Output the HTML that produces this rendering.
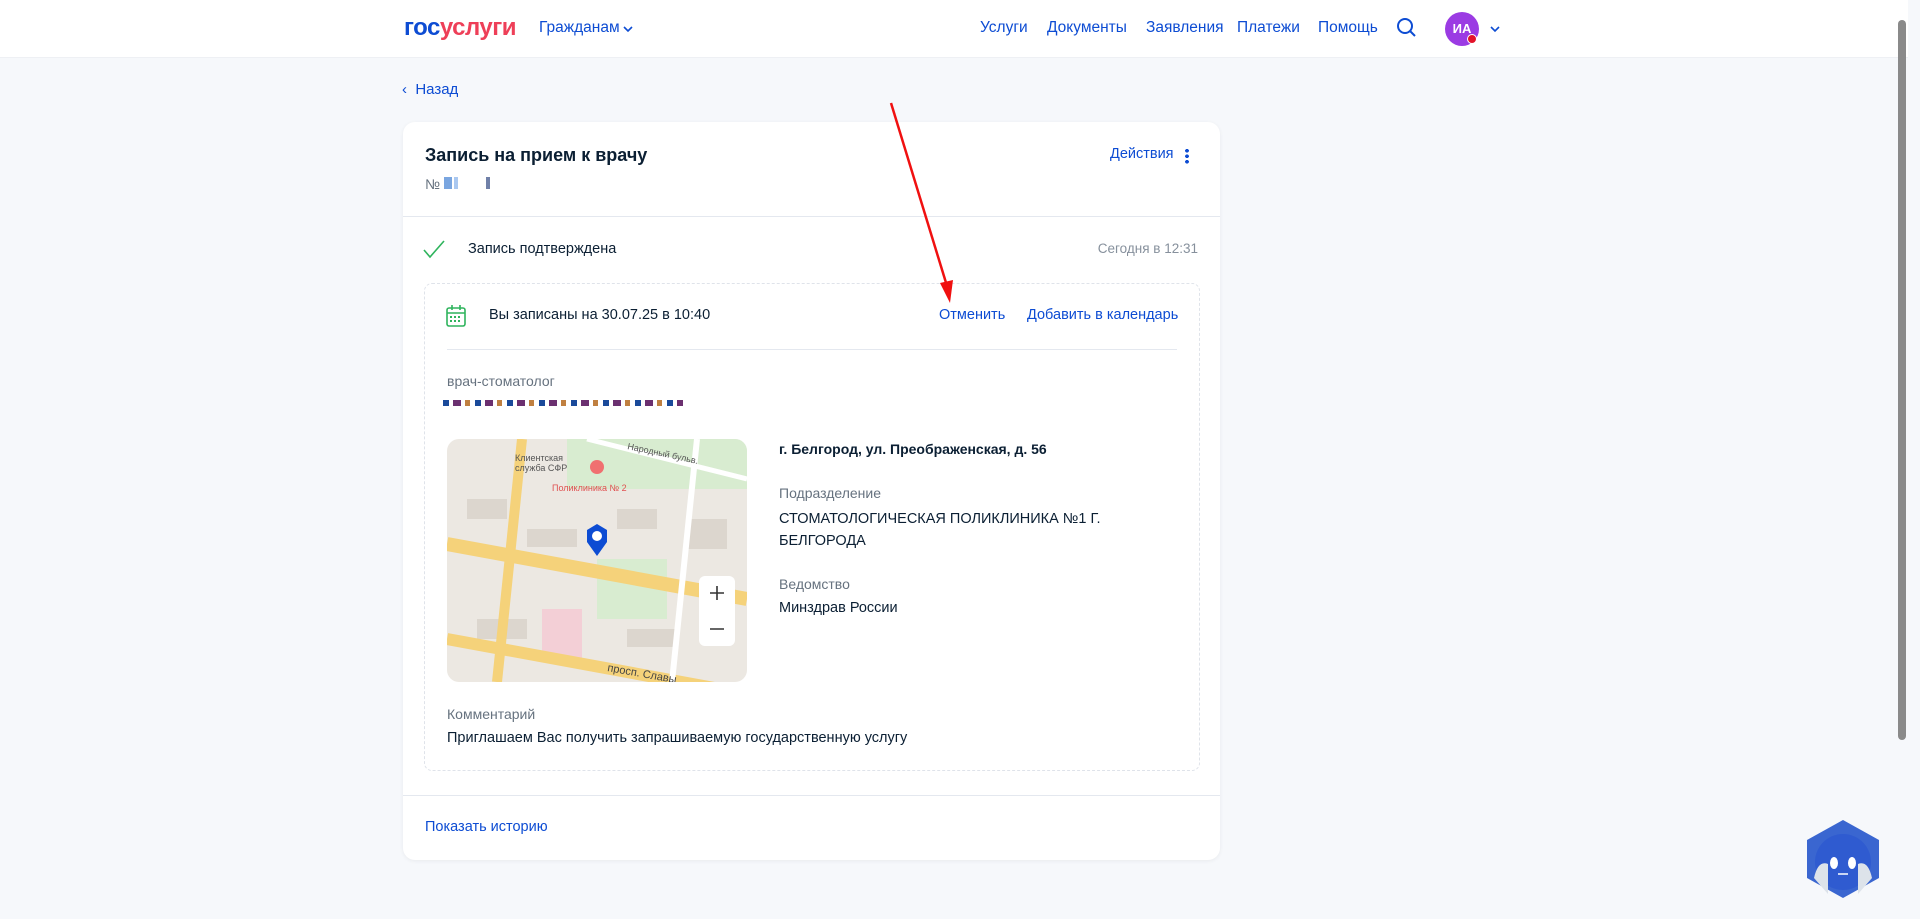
<!DOCTYPE html>
<html><head><meta charset="utf-8"><style>
*{margin:0;padding:0;box-sizing:border-box}
body{width:1920px;height:919px;overflow:hidden;background:#f6f8fb;font-family:"Liberation Sans",sans-serif;color:#0b1f33;position:relative}
.a{position:absolute;white-space:nowrap}
.blue{color:#0d4cd3}
.hdr{position:absolute;left:0;top:0;width:1908px;height:58px;background:#fff;border-bottom:1px solid #eef0f4}
.nav{font-size:15.5px;color:#0d4cd3;top:19px}
.card{position:absolute;left:403px;top:122px;width:817px;height:738px;background:#fff;border-radius:12px;box-shadow:0 1px 4px rgba(0,0,0,.06)}
.lbl{color:#66727f;font-size:14px}
.t{font-size:14.5px}
</style></head><body>
<div class="hdr"></div>
<div class="a" style="left:404px;top:14px;font-size:24px;font-weight:bold;letter-spacing:-0.5px"><span style="color:#0d4cd3">гос</span><span style="color:#ee3f58">услуги</span></div>
<div class="a nav" style="left:539px">Гражданам</div>
<svg class="a" style="left:622px;top:24px" width="12" height="10"><path d="M2 3l4 4 4-4" stroke="#0d4cd3" stroke-width="1.6" fill="none"/></svg>
<div class="a nav" style="left:980px">Услуги</div>
<div class="a nav" style="left:1047px">Документы</div>
<div class="a nav" style="left:1146px">Заявления</div>
<div class="a nav" style="left:1237px">Платежи</div>
<div class="a nav" style="left:1318px">Помощь</div>
<svg class="a" style="left:1395px;top:16px" width="24" height="24"><circle cx="10" cy="10" r="7" stroke="#0d4cd3" stroke-width="2" fill="none"/><path d="M15 15l5 5" stroke="#0d4cd3" stroke-width="2"/></svg>
<div class="a" style="left:1445px;top:12px;width:34px;height:34px;border-radius:50%;background:#9b3be3;color:#fff;font-size:13px;font-weight:bold;text-align:center;line-height:34px">ИА</div>
<div class="a" style="left:1467px;top:34px;width:10px;height:10px;border-radius:50%;background:#e3122a;border:1px solid #fff"></div>
<svg class="a" style="left:1489px;top:24px" width="12" height="10"><path d="M2 3l4 4 4-4" stroke="#0d4cd3" stroke-width="1.6" fill="none"/></svg>
<div class="a" style="left:1898px;top:20px;width:8px;height:720px;background:#8a8a8a;border-radius:4px"></div>

<div class="a blue" style="left:402px;top:81px;font-size:15px">‹&nbsp; Назад</div>

<div class="card">
 <div class="a" style="left:22px;top:23px;font-size:18px;font-weight:bold;color:#0b1f33">Запись на прием к врачу</div>
 <div class="a" style="left:22px;top:54px;font-size:14px;color:#66727f">№ <span style="display:inline-block;width:8px;height:12px;background:#7aa6e0"></span><span style="display:inline-block;width:4px;height:12px;background:#aac8f0;margin-left:2px"></span> <span style="display:inline-block;width:4px;height:12px;background:#7080a8;margin-left:24px"></span></div>
 <div class="a blue" style="left:707px;top:24px;font-size:14.5px">Действия</div>
 <div class="a" style="left:782px;top:26px;width:4px;height:16px;background:radial-gradient(circle,#0d4cd3 1.8px,transparent 2px) 0 0/4px 5.5px"></div>
 <div class="a" style="left:0;top:94px;width:817px;height:1px;background:#e4e8ef"></div>
 <svg class="a" style="left:19px;top:117px" width="24" height="20"><path d="M2 11l6 7L22 2" stroke="#2fb45d" stroke-width="1.6" fill="none"/></svg>
 <div class="a t" style="left:65px;top:119px">Запись подтверждена</div>
 <div class="a" style="right:22px;top:119px;font-size:13.5px;color:#86909c">Сегодня в 12:31</div>
 <div class="a" style="left:21px;top:161px;width:776px;height:488px;border:1px dashed #dfe3ea;border-radius:8px">
  <svg class="a" style="left:20px;top:20px" width="22" height="24"><rect x="2" y="4" width="18" height="18" rx="2" stroke="#2fb45d" stroke-width="1.6" fill="none"/><path d="M2 9h18M7 1v5M15 1v5" stroke="#2fb45d" stroke-width="1.6"/><g fill="#2fb45d"><rect x="5" y="12" width="2" height="2"/><rect x="9" y="12" width="2" height="2"/><rect x="13" y="12" width="2" height="2"/><rect x="5" y="16" width="2" height="2"/><rect x="9" y="16" width="2" height="2"/><rect x="13" y="16" width="2" height="2"/></g></svg>
  <div class="a t" style="left:64px;top:23px">Вы записаны на 30.07.25 в 10:40</div>
  <div class="a blue t" style="left:514px;top:23px">Отменить</div>
  <div class="a blue t" style="left:602px;top:23px">Добавить в календарь</div>
  <div class="a" style="left:22px;top:65px;width:730px;height:1px;background:#e4e8ef"></div>
  <div class="a lbl" style="left:22px;top:89px">врач-стоматолог</div>
  <div class="a" style="left:18px;top:116px;width:240px;height:6px;background:repeating-linear-gradient(90deg,#1a4a9a 0 6px,transparent 6px 10px,#6b3070 10px 18px,transparent 18px 22px,#c08040 22px 27px,transparent 27px 32px)"></div>
  <svg class="a" style="left:22px;top:155px;border-radius:12px" width="300" height="243" viewBox="0 0 300 243">
   <rect width="300" height="243" fill="#ece8e2"/>
   <rect x="120" y="0" width="180" height="50" fill="#d8ecd0"/>
   <rect x="150" y="120" width="70" height="60" fill="#d8ecd0"/>
   <g fill="#dcd6ce"><rect x="20" y="60" width="40" height="20"/><rect x="80" y="90" width="50" height="18"/><rect x="170" y="70" width="40" height="20"/><rect x="240" y="80" width="40" height="30"/><rect x="30" y="180" width="50" height="20"/><rect x="180" y="190" width="50" height="18"/></g>
   <rect x="95" y="170" width="40" height="50" fill="#f3cfd6"/>
   <path d="M0 105L300 160" stroke="#f5d27a" stroke-width="14"/>
   <path d="M0 200L300 255" stroke="#f5d27a" stroke-width="12"/>
   <path d="M75 0L50 243" stroke="#f5d27a" stroke-width="10"/>
   <path d="M250 0L225 243" stroke="#fff" stroke-width="6"/>
   <path d="M140 0L300 40" stroke="#fff" stroke-width="5"/>
   <text x="68" y="22" font-size="9" fill="#555" font-family="Liberation Sans">Клиентская</text>
   <text x="68" y="32" font-size="9" fill="#555" font-family="Liberation Sans">служба СФР</text>
   <circle cx="150" cy="28" r="7" fill="#f07070"/><text x="105" y="52" font-size="9" fill="#e05050" font-family="Liberation Sans">Поликлиника № 2</text>
   <text x="180" y="10" font-size="9" fill="#555" font-family="Liberation Sans" transform="rotate(12 180 10)">Народный бульв.</text>
   <text x="160" y="232" font-size="11" fill="#444" font-family="Liberation Sans" transform="rotate(10 160 232)">просп. Славы</text>
   <path d="M150 85l10 6v12l-10 14-10-14v-12z" fill="#0d4cd3"/><circle cx="150" cy="97" r="5" fill="#fff"/>
   <rect x="252" y="137" width="36" height="70" rx="6" fill="#fff"/>
   <path d="M270 147v14M263 154h14M263 190h14" stroke="#333" stroke-width="1.6"/>
  </svg>
  <div class="a" style="left:354px;top:157px;font-size:14px;font-weight:bold">г. Белгород, ул. Преображенская, д. 56</div>
  <div class="a lbl" style="left:354px;top:201px">Подразделение</div>
  <div class="a t" style="left:354px;top:224px;line-height:22px;white-space:normal;width:350px">СТОМАТОЛОГИЧЕСКАЯ ПОЛИКЛИНИКА №1 Г. БЕЛГОРОДА</div>
  <div class="a lbl" style="left:354px;top:292px">Ведомство</div>
  <div class="a t" style="left:354px;top:316px">Минздрав России</div>
  <div class="a lbl" style="left:22px;top:422px">Комментарий</div>
  <div class="a t" style="left:22px;top:446px">Приглашаем Вас получить запрашиваемую государственную услугу</div>
 </div>
 <div class="a" style="left:0;top:673px;width:817px;height:1px;background:#e4e8ef"></div>
 <div class="a blue t" style="left:22px;top:697px">Показать историю</div>
</div>

<svg class="a" style="left:0;top:0" width="1920" height="919"><path d="M891 103L947 286" stroke="#f01010" stroke-width="2.5"/><path d="M940 283l10 20 3-23z" fill="#f01010"/></svg>

<svg class="a" style="left:1804px;top:818px" width="78" height="82"><path d="M39 2l36 20v38L39 80 3 60V22z" fill="#3a66d0"/><circle cx="39" cy="44" r="28" fill="#2f5bd0"/><path d="M10 60q4-18 14-14v30zM68 60q-4-18-14-14v30z" fill="#dde3ea"/><ellipse cx="30" cy="45" rx="4" ry="6" fill="#fff"/><ellipse cx="48" cy="45" rx="4" ry="6" fill="#fff"/><path d="M34 56h10" stroke="#fff" stroke-width="1.5"/></svg>
</body></html>
